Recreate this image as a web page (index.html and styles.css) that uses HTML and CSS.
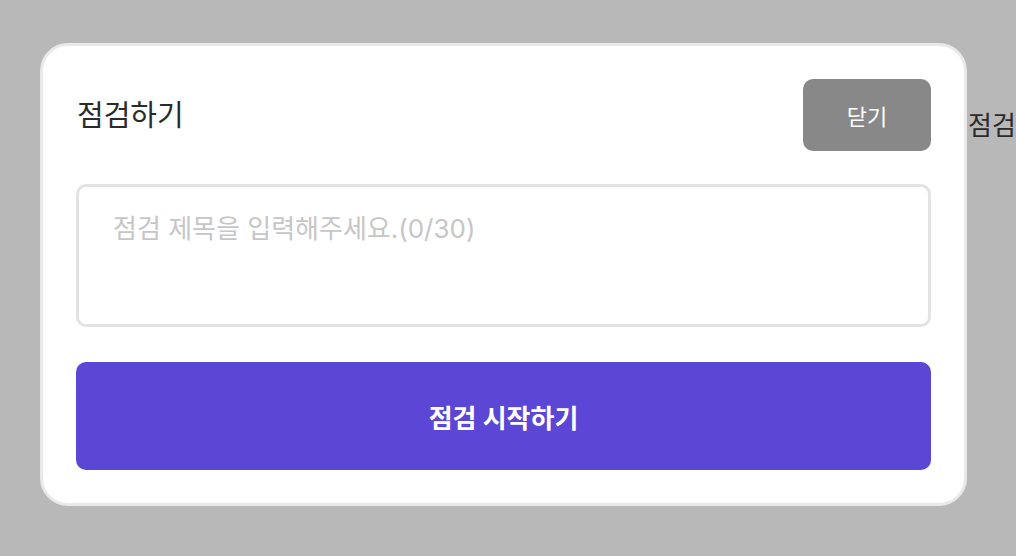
FILE: index.html
```html
<!DOCTYPE html>
<html lang="ko">
<head>
<meta charset="utf-8">
<link rel="stylesheet" href="styles.css">
</head>
<body>
<div class="stage">
  <div class="modal">
    <div class="modal-head">
      <h2 class="modal-title">점검하기</h2>
      <button class="btn-close" type="button">닫기</button>
    </div>
    <textarea class="title-input" placeholder="점검 제목을 입력해주세요.(0/30)"></textarea>
    <button class="btn-start" type="button">점검 시작하기</button>
  </div>
  <div class="behind-text">점검</div>
</div>
</body>
</html>
```

FILE: styles.css
```css
html, body {
  margin: 0;
  padding: 0;
  width: 1016px;
  height: 556px;
  overflow: hidden;
  background: #b8b8b8;
  font-family: Inter, "Noto Sans CJK KR", sans-serif;
}

.stage {
  display: flex;
  align-items: flex-start;
  padding: 43px 0 0 40px;
}

.modal {
  flex: 0 0 auto;
  box-sizing: border-box;
  width: 927px;
  height: 463px;
  background: #ffffff;
  border: 3px solid #e9e9e9;
  border-radius: 28px;
  padding: 33px;
  display: flex;
  flex-direction: column;
}

.modal-head {
  display: flex;
  align-items: center;
  justify-content: space-between;
  height: 72px;
}

.modal-title {
  margin: 0 0 4px 1px;
  font-size: 29px;
  font-weight: 400;
  color: #2b2b2b;
}

.btn-close {
  width: 128px;
  height: 72px;
  border: none;
  border-radius: 10px;
  background: #888888;
  color: #ffffff;
  font-family: inherit;
  font-size: 22px;
  padding: 0;
}

.title-input {
  margin-top: 33px;
  box-sizing: border-box;
  width: 100%;
  height: 143px;
  border: 3px solid #e3e3e3;
  border-radius: 10px;
  padding: 23px 31px 23px 34px;
  font-family: inherit;
  font-size: 26px;
  line-height: 38px;
  resize: none;
  outline: none;
  color: #333;
}

.title-input::placeholder {
  color: #c6c6c6;
}

.btn-start {
  margin-top: 35px;
  width: 100%;
  height: 108px;
  border: none;
  border-radius: 10px;
  background: #5c46d5;
  color: #ffffff;
  font-family: inherit;
  font-size: 26px;
  font-weight: 700;
  padding: 0;
}

.behind-text {
  flex: 0 0 auto;
  margin-top: 62px;
  margin-left: 1px;
  font-size: 26px;
  color: #2b2b2b;
  white-space: nowrap;
}
```
